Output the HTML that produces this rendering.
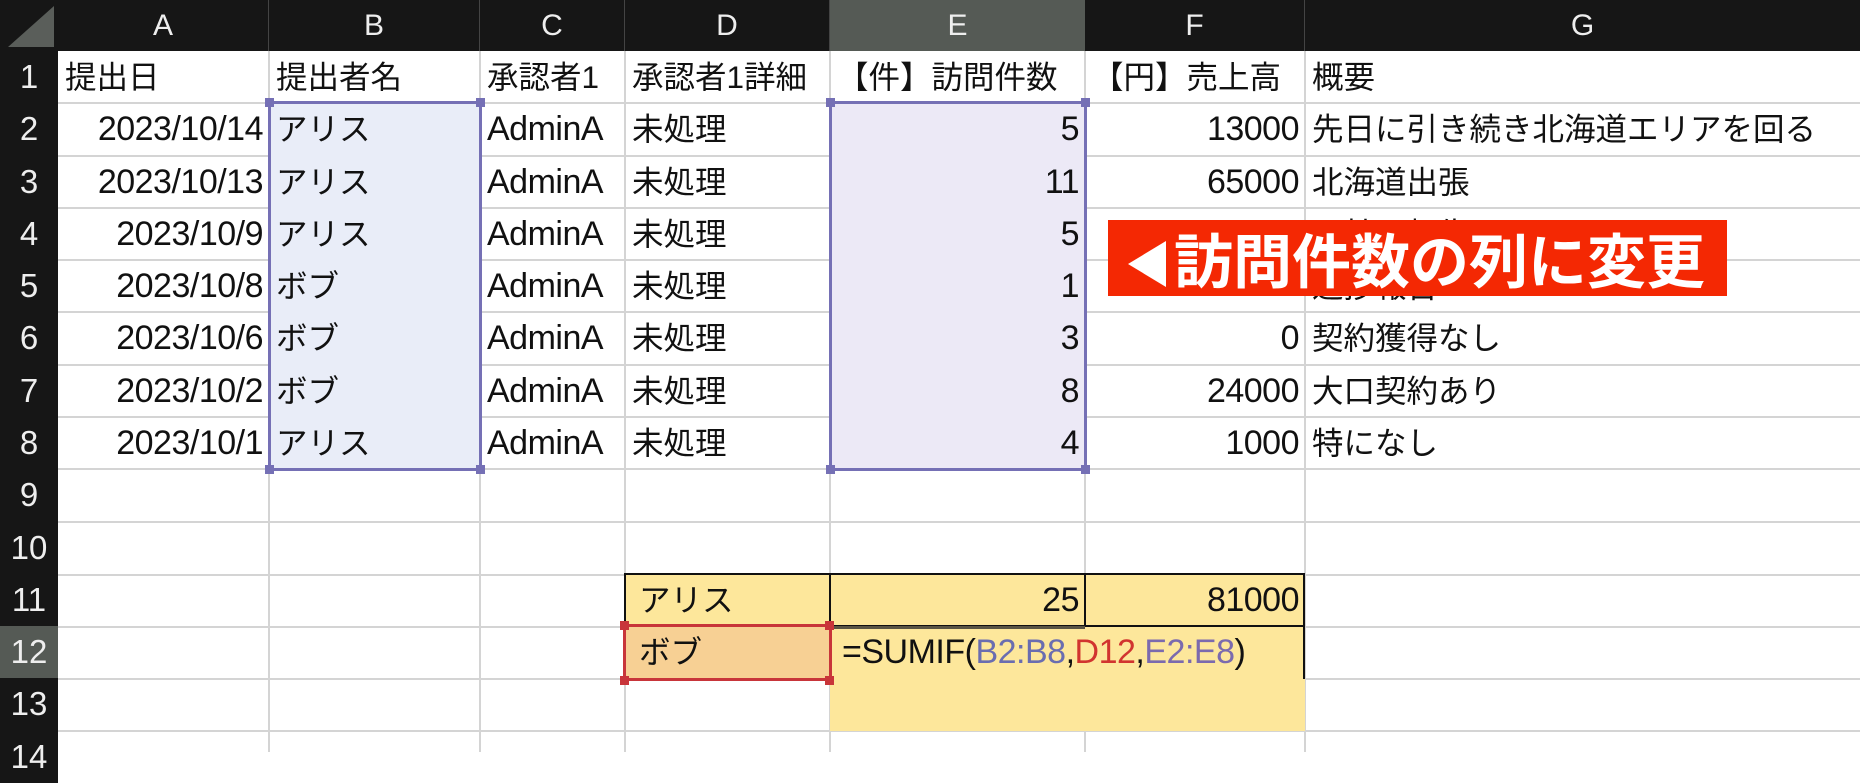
<!DOCTYPE html>
<html><head><meta charset="utf-8"><style>
body{margin:0;width:1860px;height:752px;overflow:hidden;background:#fff;font-family:"Liberation Sans","Noto Sans CJK JP",sans-serif;position:relative}
.c{position:absolute;box-sizing:border-box;font-size:31.5px;line-height:52px;white-space:nowrap;overflow:visible;color:#111}
.n{font-size:34px;letter-spacing:-0.5px}
.r{text-align:right;padding-right:6px}
.l{padding-left:7px}
.h{position:absolute;background:#161616;color:#eee;font-size:30px;text-align:center;box-sizing:border-box}
.vl{position:absolute;top:51px;width:2px;height:701px;background:#d4d4d4}
.hl{position:absolute;left:58px;width:1802px;height:2px;background:#d4d4d4}
.hd{position:absolute;width:9px;height:9px}
</style></head><body>
<div class="vl" style="left:268px"></div><div class="vl" style="left:479px"></div><div class="vl" style="left:624px"></div><div class="vl" style="left:829px"></div><div class="vl" style="left:1084px"></div><div class="vl" style="left:1304px"></div>
<div class="hl" style="top:102px"></div><div class="hl" style="top:155px"></div><div class="hl" style="top:207px"></div><div class="hl" style="top:259px"></div><div class="hl" style="top:311px"></div><div class="hl" style="top:364px"></div><div class="hl" style="top:416px"></div><div class="hl" style="top:468px"></div><div class="hl" style="top:521px"></div><div class="hl" style="top:574px"></div><div class="hl" style="top:626px"></div><div class="hl" style="top:678px"></div><div class="hl" style="top:730px"></div>
<div style="position:absolute;left:269px;top:103px;width:211px;height:366px;background:#e9edf8"></div>
<div style="position:absolute;left:830px;top:103px;width:255px;height:366px;background:#ece9f6"></div>
<div style="position:absolute;left:625px;top:574px;width:680px;height:53px;background:#fde79b"></div>
<div style="position:absolute;left:830px;top:626px;width:475px;height:105px;background:#fde79b"></div>
<div style="position:absolute;left:625px;top:626px;width:205px;height:53px;background:#f7d094"></div>
<div style="position:absolute;left:624px;top:573px;width:681px;height:54px;border:2px solid #111;box-sizing:border-box"></div>
<div style="position:absolute;left:829px;top:574px;width:2px;height:53px;background:#111"></div>
<div style="position:absolute;left:1084px;top:574px;width:2px;height:53px;background:#111"></div>
<div style="position:absolute;left:1303px;top:626px;width:2px;height:53px;background:#111"></div>
<div style="position:absolute;left:830px;top:626px;width:255px;height:3px;background:#5a5544"></div>
<div class="h" style="left:0;top:0;width:1860px;height:51px"></div>
<div style="position:absolute;left:8px;top:6px;width:0;height:0;border-left:46px solid transparent;border-bottom:41px solid #5a5e5a"></div>
<div class="h" style="left:58px;top:0;width:211px;height:51px;line-height:51px;border-right:1px solid #444">A</div>
<div class="h" style="left:269px;top:0;width:211px;height:51px;line-height:51px;border-right:1px solid #444">B</div>
<div class="h" style="left:480px;top:0;width:145px;height:51px;line-height:51px;border-right:1px solid #444">C</div>
<div class="h" style="left:625px;top:0;width:205px;height:51px;line-height:51px;border-right:1px solid #444">D</div>
<div class="h" style="left:830px;top:0;width:255px;height:51px;line-height:51px;background:#555a55">E</div>
<div class="h" style="left:1085px;top:0;width:220px;height:51px;line-height:51px;border-right:1px solid #444">F</div>
<div class="h" style="left:1305px;top:0;width:555px;height:51px;line-height:51px">G</div>
<div class="h" style="left:0;top:51px;width:58px;height:701px"></div>
<div class="h" style="left:0;top:51px;width:58px;line-height:52px;font-size:33px">1</div>
<div class="h" style="left:0;top:103px;width:58px;line-height:52px;font-size:33px">2</div>
<div class="h" style="left:0;top:156px;width:58px;line-height:52px;font-size:33px">3</div>
<div class="h" style="left:0;top:208px;width:58px;line-height:52px;font-size:33px">4</div>
<div class="h" style="left:0;top:260px;width:58px;line-height:52px;font-size:33px">5</div>
<div class="h" style="left:0;top:312px;width:58px;line-height:52px;font-size:33px">6</div>
<div class="h" style="left:0;top:365px;width:58px;line-height:52px;font-size:33px">7</div>
<div class="h" style="left:0;top:417px;width:58px;line-height:52px;font-size:33px">8</div>
<div class="h" style="left:0;top:469px;width:58px;line-height:52px;font-size:33px">9</div>
<div class="h" style="left:0;top:522px;width:58px;line-height:52px;font-size:33px">10</div>
<div class="h" style="left:0;top:574px;width:58px;line-height:52px;font-size:33px">11</div>
<div class="h" style="left:0;top:626px;width:58px;line-height:52px;font-size:33px;background:#555a55">12</div>
<div class="h" style="left:0;top:678px;width:58px;line-height:52px;font-size:33px">13</div>
<div class="h" style="left:0;top:731px;width:58px;line-height:52px;font-size:33px">14</div>
<div class="c l" style="left:58px;top:51px">提出日</div>
<div class="c l" style="left:269px;top:51px">提出者名</div>
<div class="c l" style="left:480px;top:51px">承認者1</div>
<div class="c l" style="left:625px;top:51px">承認者1詳細</div>
<div class="c l" style="left:830px;top:51px">【件】訪問件数</div>
<div class="c l" style="left:1085px;top:51px">【円】売上高</div>
<div class="c l" style="left:1305px;top:51px">概要</div>
<div class="c r n" style="left:58px;top:103px;width:211px">2023/10/14</div><div class="c l" style="left:269px;top:103px">アリス</div><div class="c l n" style="left:480px;top:103px">AdminA</div><div class="c l" style="left:625px;top:103px">未処理</div><div class="c r n" style="left:830px;top:103px;width:255px">5</div><div class="c r n" style="left:1085px;top:103px;width:220px">13000</div><div class="c l" style="left:1305px;top:103px">先日に引き続き北海道エリアを回る</div>
<div class="c r n" style="left:58px;top:156px;width:211px">2023/10/13</div><div class="c l" style="left:269px;top:156px">アリス</div><div class="c l n" style="left:480px;top:156px">AdminA</div><div class="c l" style="left:625px;top:156px">未処理</div><div class="c r n" style="left:830px;top:156px;width:255px">11</div><div class="c r n" style="left:1085px;top:156px;width:220px">65000</div><div class="c l" style="left:1305px;top:156px">北海道出張</div>
<div class="c r n" style="left:58px;top:208px;width:211px">2023/10/9</div><div class="c l" style="left:269px;top:208px">アリス</div><div class="c l n" style="left:480px;top:208px">AdminA</div><div class="c l" style="left:625px;top:208px">未処理</div><div class="c r n" style="left:830px;top:208px;width:255px">5</div>
<div class="c l" style="left:1305px;top:208px">一社へ報告</div>
<div class="c l" style="left:1305px;top:260px">進捗報告</div>
<div class="c r n" style="left:58px;top:260px;width:211px">2023/10/8</div><div class="c l" style="left:269px;top:260px">ボブ</div><div class="c l n" style="left:480px;top:260px">AdminA</div><div class="c l" style="left:625px;top:260px">未処理</div><div class="c r n" style="left:830px;top:260px;width:255px">1</div>
<div class="c r n" style="left:58px;top:312px;width:211px">2023/10/6</div><div class="c l" style="left:269px;top:312px">ボブ</div><div class="c l n" style="left:480px;top:312px">AdminA</div><div class="c l" style="left:625px;top:312px">未処理</div><div class="c r n" style="left:830px;top:312px;width:255px">3</div><div class="c r n" style="left:1085px;top:312px;width:220px">0</div><div class="c l" style="left:1305px;top:312px">契約獲得なし</div>
<div class="c r n" style="left:58px;top:365px;width:211px">2023/10/2</div><div class="c l" style="left:269px;top:365px">ボブ</div><div class="c l n" style="left:480px;top:365px">AdminA</div><div class="c l" style="left:625px;top:365px">未処理</div><div class="c r n" style="left:830px;top:365px;width:255px">8</div><div class="c r n" style="left:1085px;top:365px;width:220px">24000</div><div class="c l" style="left:1305px;top:365px">大口契約あり</div>
<div class="c r n" style="left:58px;top:417px;width:211px">2023/10/1</div><div class="c l" style="left:269px;top:417px">アリス</div><div class="c l n" style="left:480px;top:417px">AdminA</div><div class="c l" style="left:625px;top:417px">未処理</div><div class="c r n" style="left:830px;top:417px;width:255px">4</div><div class="c r n" style="left:1085px;top:417px;width:220px">1000</div><div class="c l" style="left:1305px;top:417px">特になし</div>
<div class="c l" style="left:632px;top:574px">アリス</div>
<div class="c r n" style="left:830px;top:574px;width:255px">25</div>
<div class="c r n" style="left:1085px;top:574px;width:220px">81000</div>
<div class="c l" style="left:632px;top:626px">ボブ</div>
<div class="c l n" style="left:835px;top:626px">=SUMIF(<span style="color:#6a6db0">B2:B8</span>,<span style="color:#d1342f">D12</span>,<span style="color:#7b6aae">E2:E8</span>)</div>
<div style="position:absolute;left:268px;top:101px;width:214px;height:370px;border:3px solid #7570b5;box-sizing:border-box"></div>
<div class="hd" style="left:265px;top:98px;background:#7570b5"></div><div class="hd" style="left:476px;top:98px;background:#7570b5"></div><div class="hd" style="left:265px;top:465px;background:#7570b5"></div><div class="hd" style="left:476px;top:465px;background:#7570b5"></div>
<div style="position:absolute;left:829px;top:101px;width:258px;height:370px;border:3px solid #7570b5;box-sizing:border-box"></div>
<div class="hd" style="left:826px;top:98px;background:#7570b5"></div><div class="hd" style="left:1081px;top:98px;background:#7570b5"></div><div class="hd" style="left:826px;top:465px;background:#7570b5"></div><div class="hd" style="left:1081px;top:465px;background:#7570b5"></div>
<div style="position:absolute;left:623px;top:624px;width:209px;height:57px;border:3px solid #c8353a;box-sizing:border-box"></div>
<div class="hd" style="left:620px;top:621px;background:#c8353a"></div><div class="hd" style="left:825px;top:621px;background:#c8353a"></div><div class="hd" style="left:620px;top:676px;background:#c8353a"></div><div class="hd" style="left:825px;top:676px;background:#c8353a"></div>
<div style="position:absolute;left:1108px;top:220px;width:619px;height:76px;background:#f42803;color:#fff;font-weight:bold;font-size:59px;line-height:76px;font-family:'Noto Sans CJK JP',sans-serif;white-space:nowrap;overflow:hidden">
<span style="display:inline-block;width:0;height:0;border-top:23px solid transparent;border-bottom:23px solid transparent;border-right:38px solid #fff;margin:0 8px 0 20px;vertical-align:-4px"></span>訪問件数の列に変更</div>
</body></html>
